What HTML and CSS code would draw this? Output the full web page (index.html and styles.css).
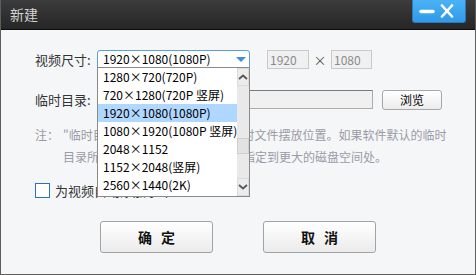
FILE: index.html
```html
<!DOCTYPE html>
<html lang="zh-CN">
  <head>
    <meta charset="UTF-8" />
    <title>新建</title>
    <link rel="stylesheet" href="styles.css">
  </head>
  <body>
    <div class="window">
      <div class="titlebar">
        <span class="title">新建</span>
        <div class="controls">
          <svg class="ctl" width="22" height="14" viewBox="0 0 22 14">
            <line x1="7" y1="7.5" x2="19" y2="7.5" stroke="#fff" stroke-width="3.5" stroke-linecap="round" />
          </svg>
          <svg class="ctl" width="22" height="14" viewBox="0 0 22 14">
            <path d="M6 1.5 L16 12.5 M16 1.5 L6 12.5" stroke="#fff" stroke-width="2.6" stroke-linecap="round" />
          </svg>
        </div>
      </div>

      <div class="content">
        <!-- 视频尺寸 -->
        <div class="row">
          <span class="label">视频尺寸:</span>
          <div class="combo">
            <span class="combo-value">1920×1080(1080P)</span>
            <span class="combo-arrow"></span>
            <div class="combo-list">
              <ul class="options">
                <li>1280×720(720P)</li>
                <li>720×1280(720P 竖屏)</li>
                <li class="selected">1920×1080(1080P)</li>
                <li>1080×1920(1080P 竖屏)</li>
                <li>2048×1152</li>
                <li>1152×2048(竖屏)</li>
                <li>2560×1440(2K)</li>
              </ul>
              <div class="scrollbar">
                <div class="sb-btn">
                  <svg width="10" height="6" viewBox="0 0 10 6"><polyline points="1,5 5,1.5 9,5" fill="none" stroke="#555" stroke-width="1.8" /></svg>
                </div>
                <div class="sb-track"><div class="sb-thumb"></div></div>
                <div class="sb-btn">
                  <svg width="10" height="6" viewBox="0 0 10 6"><polyline points="1,1 5,4.5 9,1" fill="none" stroke="#555" stroke-width="1.8" /></svg>
                </div>
              </div>
            </div>
          </div>
          <span class="dim">1920</span>
          <span class="times">×</span>
          <span class="dim">1080</span>
        </div>

        <!-- 临时目录 -->
        <div class="row row-dir">
          <span class="label">临时目录:</span>
          <span class="path"></span>
          <button class="browse">浏览</button>
        </div>

        <div class="note">
          <span class="note-head">注：</span>
          <p class="note-text">"临时目录"是指录制视频过程中临时文件摆放位置。如果软件默认的临时<br>目录所在的磁盘空间不足，建议您指定到更大的磁盘空间处。</p>
        </div>

        <label class="check-row">
          <span class="checkbox"></span>
          <span>为视频自动添加水印</span>
        </label>

        <div class="actions">
          <button class="action">确定</button>
          <button class="action">取消</button>
        </div>
      </div>
    </div>
  </body>
</html>
```

FILE: styles.css
```css
/* 全局 */
body {
  margin: 0;
  font-family: "Noto Sans CJK SC", "Liberation Sans", sans-serif;
  background-color: #f5f6f8;
}

.window {
  width: 476px;
  height: 275px;
  box-sizing: border-box;
  border: 1px solid #5e5e5e;
  border-top: none;
  display: flex;
  flex-direction: column;
}

/* 标题栏 */
.titlebar {
  height: 29px;
  border-bottom: 1px solid #0c0c0c;
  background: linear-gradient(#3c3c3c, #262626);
  display: flex;
  justify-content: space-between;
  align-items: flex-start;
}

.title {
  font-size: 14px;
  line-height: 29px;
  color: #d2d2d2;
  margin-left: 9px;
}

.controls {
  width: 54px;
  height: 23px;
  margin-right: 9px;
  box-sizing: border-box;
  border: 1px solid #2c78b8;
  border-top: none;
  border-radius: 0 0 3px 3px;
  background: linear-gradient(#4bb2f6, #2f9ae9);
  display: flex;
  align-items: center;
  padding-left: 1px;
}

.ctl {
  display: block;
}

/* 内容 */
.content {
  flex: 1;
  padding: 20px 0 0 34px;
  display: flex;
  flex-direction: column;
}

.row {
  display: flex;
  align-items: flex-start;
  height: 19px;
}

.row-dir {
  margin-top: 21px;
  height: 20px;
}

.label {
  width: 62px;
  font-size: 13px;
  line-height: 19px;
  color: #333333;
}

.combo {
  position: relative;
  width: 153px;
  height: 18px;
  box-sizing: border-box;
  border: 1px solid #5b9ee6;
  border-radius: 3px 3px 0 0;
  background-color: #ffffff;
  display: flex;
  align-items: center;
  justify-content: space-between;
  padding: 0 3px 0 5px;
}

.combo-value {
  font-size: 12px;
  line-height: 16px;
  color: #000000;
}

.combo-arrow {
  width: 0;
  height: 0;
  border-left: 5px solid transparent;
  border-right: 5px solid transparent;
  border-top: 5px solid #3d8fe0;
}

/* 下拉列表，覆盖在下面的内容上 */
.combo-list {
  position: absolute;
  top: 16px;
  left: -1px;
  width: 153px;
  height: 130px;
  box-sizing: border-box;
  border: 1px solid #8a8a8a;
  background-color: #ffffff;
  display: flex;
  z-index: 2;
}

.options {
  flex: 1;
  list-style: none;
  margin: 0;
  padding: 0;
}

.options li {
  height: 18px;
  line-height: 18px;
  padding-left: 5px;
  font-size: 12px;
  color: #000000;
  white-space: nowrap;
}

.options li.selected {
  background-color: #afd7ff;
}

.scrollbar {
  width: 16px;
  background-color: #e9e9e9;
  display: flex;
  flex-direction: column;
}

.sb-btn {
  height: 18px;
  box-sizing: border-box;
  border: 1px solid #dadada;
  background-color: #ececec;
  display: flex;
  align-items: center;
  justify-content: center;
}

.sb-track {
  flex: 1;
}

.sb-thumb {
  height: 16px;
  margin-top: 52px;
  box-sizing: border-box;
  border: 1px solid #d0d0d0;
  background-color: #e2e2e2;
}

.dim {
  width: 42px;
  height: 19px;
  box-sizing: border-box;
  margin-left: 17px;
  border: 1px solid #c9c9c9;
  background-color: #f0f0f0;
  font-size: 12px;
  line-height: 17px;
  padding-left: 2px;
  color: #8a8a8a;
}

.times + .dim {
  margin-left: 0;
  width: 41px;
}

.times {
  width: 22px;
  text-align: center;
  font-size: 13px;
  line-height: 19px;
  color: #555555;
}

.path {
  width: 276px;
  height: 19px;
  box-sizing: border-box;
  border: 1px solid #acacac;
  border-top-color: #7a7a7a;
  background-color: #f0f0f0;
}

.browse {
  margin-left: 9px;
  width: 60px;
  height: 20px;
  padding: 0;
  border: 1px solid #a8a8a8;
  border-radius: 3px;
  background: linear-gradient(#ffffff, #ececec);
  font-family: inherit;
  font-size: 12px;
  line-height: 18px;
  color: #000000;
}

/* 注释 */
.note {
  display: flex;
  margin-top: 14px;
  font-size: 12px;
  line-height: 22px;
  color: #9b9ba6;
}

.note-head {
  width: 28px;
}

.note-text {
  margin: 0;
}

.check-row {
  display: flex;
  align-items: center;
  margin-top: 15px;
  height: 15px;
  font-size: 13px;
  color: #333333;
}

.checkbox {
  width: 15px;
  height: 15px;
  box-sizing: border-box;
  border: 1px solid #2a72c8;
  background-color: #ffffff;
  margin-right: 5px;
}

/* 底部按钮 */
.actions {
  display: flex;
  gap: 50px;
  margin: 23px 0 0 65px;
}

.action {
  width: 113px;
  height: 32px;
  padding: 0 0 0 9px;
  border: 1px solid #a3a3a3;
  border-radius: 3px;
  background: linear-gradient(#ffffff, #ebebeb);
  font-family: inherit;
  font-size: 14px;
  font-weight: bold;
  letter-spacing: 9px;
  color: #111111;
}
```
